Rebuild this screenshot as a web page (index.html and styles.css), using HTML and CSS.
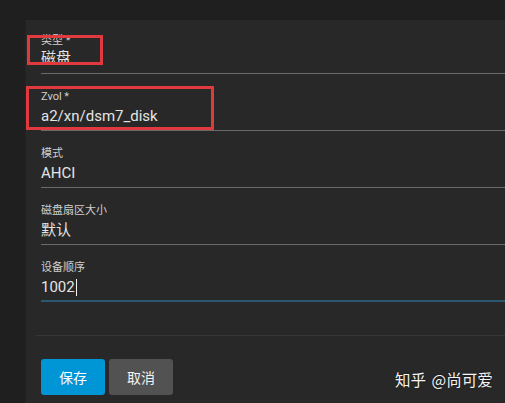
FILE: index.html
```html
<!DOCTYPE html>
<html lang="zh">
<head>
<meta charset="utf-8">
<link rel="stylesheet" href="styles.css">
</head>
<body>
<div class="page">
  <div class="panel">
    <div class="fields">
      <div class="field field-first">
        <div class="label">类型 *</div>
        <div class="value">磁盘</div>
      </div>
      <div class="field">
        <div class="label">Zvol *</div>
        <div class="value">a2/xn/dsm7_disk</div>
      </div>
      <div class="field">
        <div class="label">模式</div>
        <div class="value">AHCI</div>
      </div>
      <div class="field">
        <div class="label">磁盘扇区大小</div>
        <div class="value">默认</div>
      </div>
      <div class="field field-focus">
        <div class="label">设备顺序</div>
        <div class="value">1002<span class="caret"></span></div>
      </div>
    </div>
    <div class="footer">
      <button class="btn btn-save">保存</button>
      <button class="btn btn-cancel">取消</button>
    </div>
  </div>
  <div class="mark mark-1"></div>
  <div class="mark mark-2"></div>
  <div class="watermark">知乎 @尚可爱</div>
</div>
</body>
</html>
```

FILE: styles.css
```css
html, body {
  margin: 0;
  padding: 0;
  background: #1f1f1f;
}
body {
  font-family: Roboto, "Noto Sans CJK SC", sans-serif;
  width: 505px;
  height: 403px;
  overflow: hidden;
}
.page {
  position: relative;
  width: 505px;
  height: 403px;
  padding: 20px 0 0 25px;
  box-sizing: border-box;
}
.panel {
  background: #282828;
  border-left: 1px solid #232323;
  height: 383px;
  box-sizing: border-box;
}
.fields {
  padding-left: 15px;
}
.field {
  padding: 16px 0 4px;
  border-bottom: 1px solid #6a6a6a;
}
.field-first {
  padding-top: 14px;
  padding-bottom: 5px;
}
.label {
  font-size: 11px;
  line-height: 14px;
  color: #cfcfcf;
  margin-bottom: 2px;
}
.field-first .label {
  margin-bottom: 0;
}
.value {
  font-size: 15px;
  line-height: 20px;
  color: #e4e4e4;
  display: flex;
  align-items: center;
}
.caret {
  display: inline-block;
  width: 1px;
  height: 17px;
  background: #f0f0f0;
  margin-left: 1px;
}
.field-focus {
  border-bottom: 2px solid #2b5870;
  padding-bottom: 3px;
}
.footer {
  margin: 33px 0 0 10px;
  border-top: 1px solid #363636;
  padding: 23px 0 0 5px;
  display: flex;
  gap: 4px;
}
.btn {
  width: 64px;
  height: 36px;
  border: none;
  border-radius: 3px;
  font-family: "Noto Sans CJK SC", sans-serif;
  font-size: 14px;
  color: #ffffff;
  padding: 0;
}
.btn-save {
  background: #0095d5;
}
.btn-cancel {
  background: #525252;
  color: #f2f2f2;
}
.mark {
  position: absolute;
  border: 3px solid #e03a3e;
  box-sizing: border-box;
}
.mark-1 {
  left: 27px;
  top: 35px;
  width: 76px;
  height: 30px;
}
.mark-2 {
  left: 26px;
  top: 86px;
  width: 188px;
  height: 44px;
}
.watermark {
  position: absolute;
  left: 395px;
  top: 369px;
  font-family: "Noto Sans CJK SC", sans-serif;
  font-size: 15.5px;
  line-height: 20px;
  word-spacing: 2px;
  color: #f4f4f4;
  text-shadow: 0 0 2px rgba(0,0,0,0.6);
  white-space: nowrap;
}
```
